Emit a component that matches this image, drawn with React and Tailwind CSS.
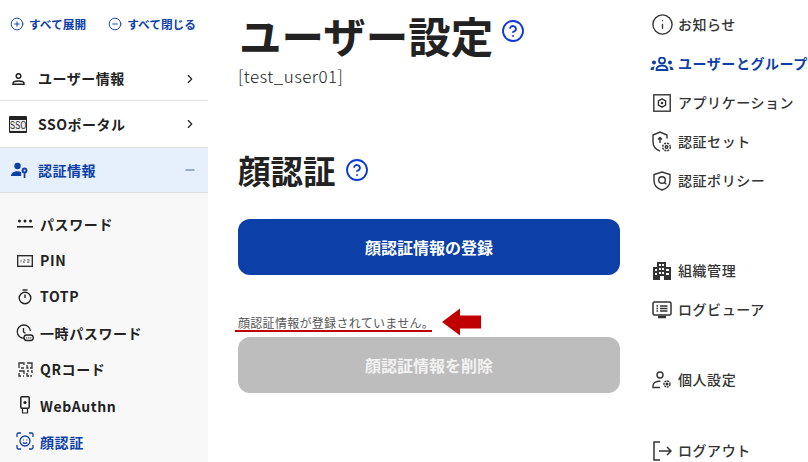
import {
  ChevronRight,
  CircleHelp,
  CirclePlus,
  CircleMinus,
  Minus,
  Info,
} from "lucide-react";

const ink = "#222222";
const blue = "#0c3fa8";

// small drawn icons
function IconUser() {
  return (
    <svg width="13" height="12" viewBox="0 0 13 12" fill="none" stroke={ink} strokeWidth="1.500">
      <circle cx="6.500" cy="3" r="2.300" />
      <path d="M1 11.200v-.9c0-1.500 2.400-2.300 5.500-2.300s5.500.8 5.500 2.300v.9z" />
    </svg>
  );
}

function IconAuth() {
  return (
    <svg width="20" height="20" viewBox="0 0 20 20" fill={blue}>
      <circle cx="7.500" cy="6" r="3.200" />
      <path d="M1 16c0-3.200 3-4.800 6.500-4.800 1.400 0 2.600.2 3.600.7V16z" />
      <circle cx="14.500" cy="10.500" r="2.900" />
      <circle cx="14.500" cy="10.500" r="1" fill="#e6f0fd" />
      <rect x="13.700" y="13" width="1.700" height="5" />
    </svg>
  );
}

function IconSso() {
  return (
    <div className="w-[18px] h-[17px] bg-[#222222] flex items-end rounded-[1px] px-[1px] pb-[2px]">
      <div className="w-full h-[11px] bg-[#eeeeee] flex items-center justify-center overflow-hidden">
        <span className="text-[11px] leading-none font-normal text-[#222222] scale-x-[0.68] font-['Liberation_Sans',sans-serif]">
          SSO
        </span>
      </div>
    </div>
  );
}

function IconDots() {
  return (
    <svg width="16" height="10" viewBox="0 0 16 10" fill={ink}>
      <circle cx="2.500" cy="2" r="1.500" />
      <circle cx="8" cy="2" r="1.500" />
      <circle cx="13.500" cy="2" r="1.500" />
      <rect x="0" y="7" width="16" height="1.600" />
    </svg>
  );
}

function IconPin() {
  return (
    <svg width="16" height="12" viewBox="0 0 16 12" fill="none">
      <rect x="0.700" y="0.700" width="14.600" height="10.600" stroke={ink} strokeWidth="1.300" />
      <path d="M4 4.500v3M6.500 4.500h1.500v1.500h-1.500v1.500h1.500M10 4.500h2v3h-2M10 6h2" stroke="#666666" strokeWidth="0.700" />
    </svg>
  );
}

function IconTimer() {
  return (
    <svg width="14" height="16" viewBox="0 0 14 16" fill="none" stroke={ink} strokeWidth="1.400">
      <path d="M4.500 1h5" />
      <circle cx="7" cy="9" r="5.800" />
      <path d="M7 5.500V9" />
    </svg>
  );
}

function IconOtp() {
  return (
    <svg width="18" height="18" viewBox="0 0 18 18" fill="none" stroke={ink} strokeWidth="1.300">
      <path d="M8 14.200A6.600 6.600 0 1 1 14.400 7" />
      <path d="M7.500 4v4l2 1.300" />
      <rect x="8" y="11" width="9.300" height="5.500" rx="2.700" />
      <path d="M10.300 13.800h5" strokeDasharray="1 1" />
    </svg>
  );
}

function IconQr() {
  return (
    <svg width="15" height="15" viewBox="0 0 15 15" fill="none" stroke="#333333" strokeWidth="1.300">
      <path d="M1 6V1h5v2M3 6h3M9 1h5v5h-2M9 3v3h1.500" />
      <path d="M1 9h5v3M1 11v3h2M5 14h1M9 9h2M13 9h1v2M9 11v3h2M13 13v1h1" />
    </svg>
  );
}

function IconKey() {
  return (
    <svg width="10" height="18" viewBox="0 0 10 18" fill="none" stroke={ink} strokeWidth="1.500" className="-mt-[3px]">
      <rect x="0.800" y="0.800" width="8.400" height="11.400" rx="1" />
      <circle cx="5" cy="6.500" r="1.600" fill={ink} stroke="none" />
      <path d="M2.500 12.500h5v4.500h-5z" strokeWidth="1.200" />
    </svg>
  );
}

function IconFace() {
  return (
    <svg width="18" height="18" viewBox="0 0 18 18" fill="none" stroke={blue} strokeWidth="1.300" className="-mt-[3px]">
      <path d="M1 5V2.400A1.400 1.400 0 0 1 2.400 1H5M13 1h2.600A1.400 1.400 0 0 1 17 2.400V5M17 13v2.600a1.400 1.400 0 0 1-1.400 1.400H13M5 17H2.400A1.400 1.400 0 0 1 1 15.600V13" />
      <circle cx="9" cy="9" r="5" />
      <path d="M7 8h.6M10.600 8h.6M6.800 10.500c1.200 1 3.200 1 4.400 0" />
    </svg>
  );
}

function IconGroup() {
  return (
    <svg width="24" height="14" viewBox="0 0 24 14" fill={blue}>
      <circle cx="12" cy="3.500" r="3" fill="none" stroke={blue} strokeWidth="1.800" />
      <path d="M6.500 13c0-3 2.400-4.400 5.500-4.400s5.500 1.400 5.500 4.400z" fill="none" stroke={blue} strokeWidth="1.800" />
      <circle cx="4" cy="5.500" r="2" />
      <circle cx="20" cy="5.500" r="2" />
      <path d="M0.500 13c0-2.500 1.500-3.600 3.700-3.600l.6.1C4 10.500 3.700 11.700 3.700 13zM23.500 13c0-2.500-1.500-3.600-3.700-3.600l-.6.1c.8 1 1.100 2.200 1.100 3.500z" />
    </svg>
  );
}

function IconApp() {
  return (
    <svg width="18" height="18" viewBox="0 0 18 18" fill="none" stroke="#333333" strokeWidth="1.400">
      <rect x="0.800" y="0.800" width="16.400" height="16.400" />
      <path d="M9 4.800l3.600 2.100v4.200L9 13.200l-3.600-2.100V6.900z" />
      <circle cx="9" cy="9" r="1.300" fill="#333333" stroke="none" />
    </svg>
  );
}

function IconShieldSet() {
  return (
    <svg width="20" height="22" viewBox="0 0 20 22" fill="none" stroke="#333333" strokeWidth="1.400">
      <path d="M8 20C3.500 18.500 1 15 1 10.500V4l7-3 7 3v3.500" />
      <path d="M8 12V6.500M6 8.500l2-2 2 2" />
      <circle cx="14.500" cy="16" r="3.800" strokeDasharray="2 1" />
      <circle cx="14.500" cy="16" r="1.300" />
    </svg>
  );
}

function IconShieldQ() {
  return (
    <svg width="18" height="20" viewBox="0 0 18 20" fill="none" stroke="#333333" strokeWidth="1.400">
      <path d="M9 19C4 17.500 1 14 1 9.500V3.500L9 1l8 2.500v6C17 14 14 17.500 9 19z" />
      <circle cx="9" cy="9" r="3.300" />
      <path d="M11.300 11.500l2 1.800" />
    </svg>
  );
}

function IconOrg() {
  return (
    <svg width="18" height="18" viewBox="0 0 18 18" fill="#333333">
      <path d="M4 0h9v5h5v13H0V5h4zM6 2v2h2V2zm3 0v2h2V2zM6 6v2h2V6zm3 0v2h2V6zM2 7v2h2V7zm11 0v2h3V7zM6 10v2h2v-2zm3 0v2h2v-2zM2 11v2h2v-2zm11 0v2h3v-2zM7 14v4h4v-4z" fillRule="evenodd" />
    </svg>
  );
}

function IconLog() {
  return (
    <svg width="20" height="18" viewBox="0 0 20 18" fill="none" stroke="#333333" strokeWidth="1.500">
      <rect x="1" y="1" width="18" height="13" rx="1.500" />
      <path d="M4.500 5h1.500M8 5h7.500M4.500 7.500h1.500M8 7.500h7.500M4.500 10h1.500M8 10h7.500" />
      <path d="M6 16h8" strokeWidth="2.500" />
    </svg>
  );
}

function IconUserGear() {
  return (
    <svg width="20" height="18" viewBox="0 0 20 18" fill="none" stroke="#333333" strokeWidth="1.400">
      <circle cx="8" cy="4" r="3" />
      <path d="M8.500 10.200C4.500 10 1 11.500 1 14.500v2h7" />
      <circle cx="15" cy="13" r="3" strokeDasharray="2 0.8" />
      <circle cx="15" cy="13" r="0.800" fill="#333333" />
    </svg>
  );
}

function IconLogout() {
  return (
    <svg width="19" height="20" viewBox="0 0 19 20" fill="none" stroke="#333333" strokeWidth="1.500">
      <path d="M7 1H1v18h6" />
      <path d="M6 10h12M14 6l4 4-4 4" />
    </svg>
  );
}

const subItems = [
  { icon: <IconDots />, label: "パスワード" },
  { icon: <IconPin />, label: "PIN" },
  { icon: <IconTimer />, label: "TOTP" },
  { icon: <IconOtp />, label: "一時パスワード" },
  { icon: <IconQr />, label: "QRコード" },
  { icon: <IconKey />, label: "WebAuthn" },
  { icon: <IconFace />, label: "顔認証", active: true },
];

function RightItem({ icon, label, active, className = "" }) {
  return (
    <div
      className={`flex items-center h-[24px] shrink-0 ${className} ${active ? "text-[#0c3fa8] font-bold" : "text-[#333333] font-medium"}`}
    >
      <div className="w-[24px] mr-[4px] flex items-center justify-center shrink-0">{icon}</div>
      <span className="text-[14px] tracking-[0.55px] whitespace-nowrap">{label}</span>
    </div>
  );
}

export default function App() {
  return (
    <div className="w-[808px] h-[462px] overflow-hidden flex bg-white font-['Noto_Sans_CJK_JP','Noto_Sans',sans-serif] text-[#222222]">
      {/* Left menu */}
      <aside className="w-[208px] shrink-0 flex flex-col">
        <div className="h-[57px] flex items-start pt-[15px] pl-[10px] gap-[22px] text-[11.7px] font-bold text-[#0c3fa8] whitespace-nowrap">
          <span className="flex items-center gap-[5px]">
            <CirclePlus size={14} strokeWidth={1.6} />
            すべて展開
          </span>
          <span className="flex items-center gap-[5px]">
            <CircleMinus size={14} strokeWidth={1.6} />
            すべて閉じる
          </span>
        </div>

        <div className="h-[44px] flex items-center pl-[12px] pr-[11px] border-b border-[#dddddd] font-bold text-[14px] tracking-[0.5px]">
          <div className="w-[26px]">
            <IconUser />
          </div>
          <span className="flex-1">ユーザー情報</span>
          <ChevronRight size={14} strokeWidth={2} />
        </div>
        <div className="h-[47px] flex items-center pl-[9px] pr-[11px] border-b border-[#dddddd] font-bold text-[14px] tracking-[0.5px]">
          <div className="w-[29px]">
            <IconSso />
          </div>
          <span className="flex-1">SSOポータル</span>
          <ChevronRight size={14} strokeWidth={2} />
        </div>
        <div className="h-[45px] flex items-center pl-[10px] pr-[11px] border-b border-[#dddddd] bg-[#e6f0fd] text-[#0c3fa8] font-bold text-[14px] tracking-[0.5px]">
          <div className="w-[28px]">
            <IconAuth />
          </div>
          <span className="flex-1">認証情報</span>
          <Minus size={14} strokeWidth={2} className="text-[#44659f]" />
        </div>

        <div className="flex-1 bg-[#f8f8f8] pt-[13px] pl-[16px] flex flex-col">
          {subItems.map((item) => (
            <div
              key={item.label}
              className={`h-[36.4px] shrink-0 flex items-center font-bold text-[14px] tracking-[0.6px] ${item.active ? "text-[#0c3fa8]" : "text-[#222222]"}`}
            >
              <div className="w-[18px] mr-[6px] flex justify-center shrink-0">{item.icon}</div>
              <span>{item.label}</span>
            </div>
          ))}
        </div>
      </aside>

      {/* Main */}
      <main className="w-[411px] shrink-0 ml-[30px] flex flex-col">
        <div className="flex items-center pt-[9px] h-[60px]">
          <h1 className="text-[42.5px] leading-[60px] font-bold ml-[1px] whitespace-nowrap">ユーザー設定</h1>
          <CircleHelp size={24} strokeWidth={1.8} className="text-[#0b36d8] ml-[8px] -mt-[8px]" />
        </div>
        <p className="text-[17px] leading-[20px] mt-[6px] font-light tracking-[0.45px] text-[#222222]">[test_user01]</p>

        <div className="flex items-center mt-[60px] h-[48px]">
          <h2 className="text-[32.5px] leading-[48px] font-bold whitespace-nowrap">顔認証</h2>
          <CircleHelp size={24} strokeWidth={1.8} className="text-[#0b36d8] ml-[9px]" />
        </div>

        <button className="mt-[25px] h-[56px] w-[382px] rounded-[12px] bg-[#0c3fa8] text-white text-[16px] font-bold">
          顔認証情報の登録
        </button>

        <div className="mt-[39px] h-[23px] flex items-start relative">
          <span className="-ml-[3px] pl-[3px] w-[197px] text-[12px] leading-[18px] text-[#555555] tracking-[0.3px] border-b-2 border-[#c00000] h-[18px] whitespace-nowrap">
            顔認証情報が登録されていません。
          </span>
          <svg width="40" height="28" viewBox="0 0 40 28" className="absolute left-[204px] top-[-6px]" fill="#c00000">
            <path d="M0 14L18 .5v7h21v13H18v7z" />
          </svg>
        </div>

        <button className="h-[56px] w-[382px] rounded-[12px] bg-[#bdbdbd] text-[#f2f2f2] text-[16px] font-bold">
          顔認証情報を削除
        </button>
      </main>

      {/* Right nav */}
      <nav className="flex-1 pl-px pt-[12.5px] flex flex-col gap-[15px]">
        <RightItem icon={<Info size={23} strokeWidth={1.4} />} label="お知らせ" />
        <RightItem icon={<IconGroup />} label="ユーザーとグループ" active />
        <RightItem icon={<IconApp />} label="アプリケーション" />
        <RightItem icon={<IconShieldSet />} label="認証セット" />
        <RightItem icon={<IconShieldQ />} label="認証ポリシー" />
        <RightItem icon={<IconOrg />} label="組織管理" className="mt-[51px]" />
        <RightItem icon={<IconLog />} label="ログビューア" />
        <RightItem icon={<IconUserGear />} label="個人設定" className="mt-[31px]" />
        <RightItem icon={<IconLogout />} label="ログアウト" className="mt-[32px]" />
      </nav>
    </div>
  );
}
